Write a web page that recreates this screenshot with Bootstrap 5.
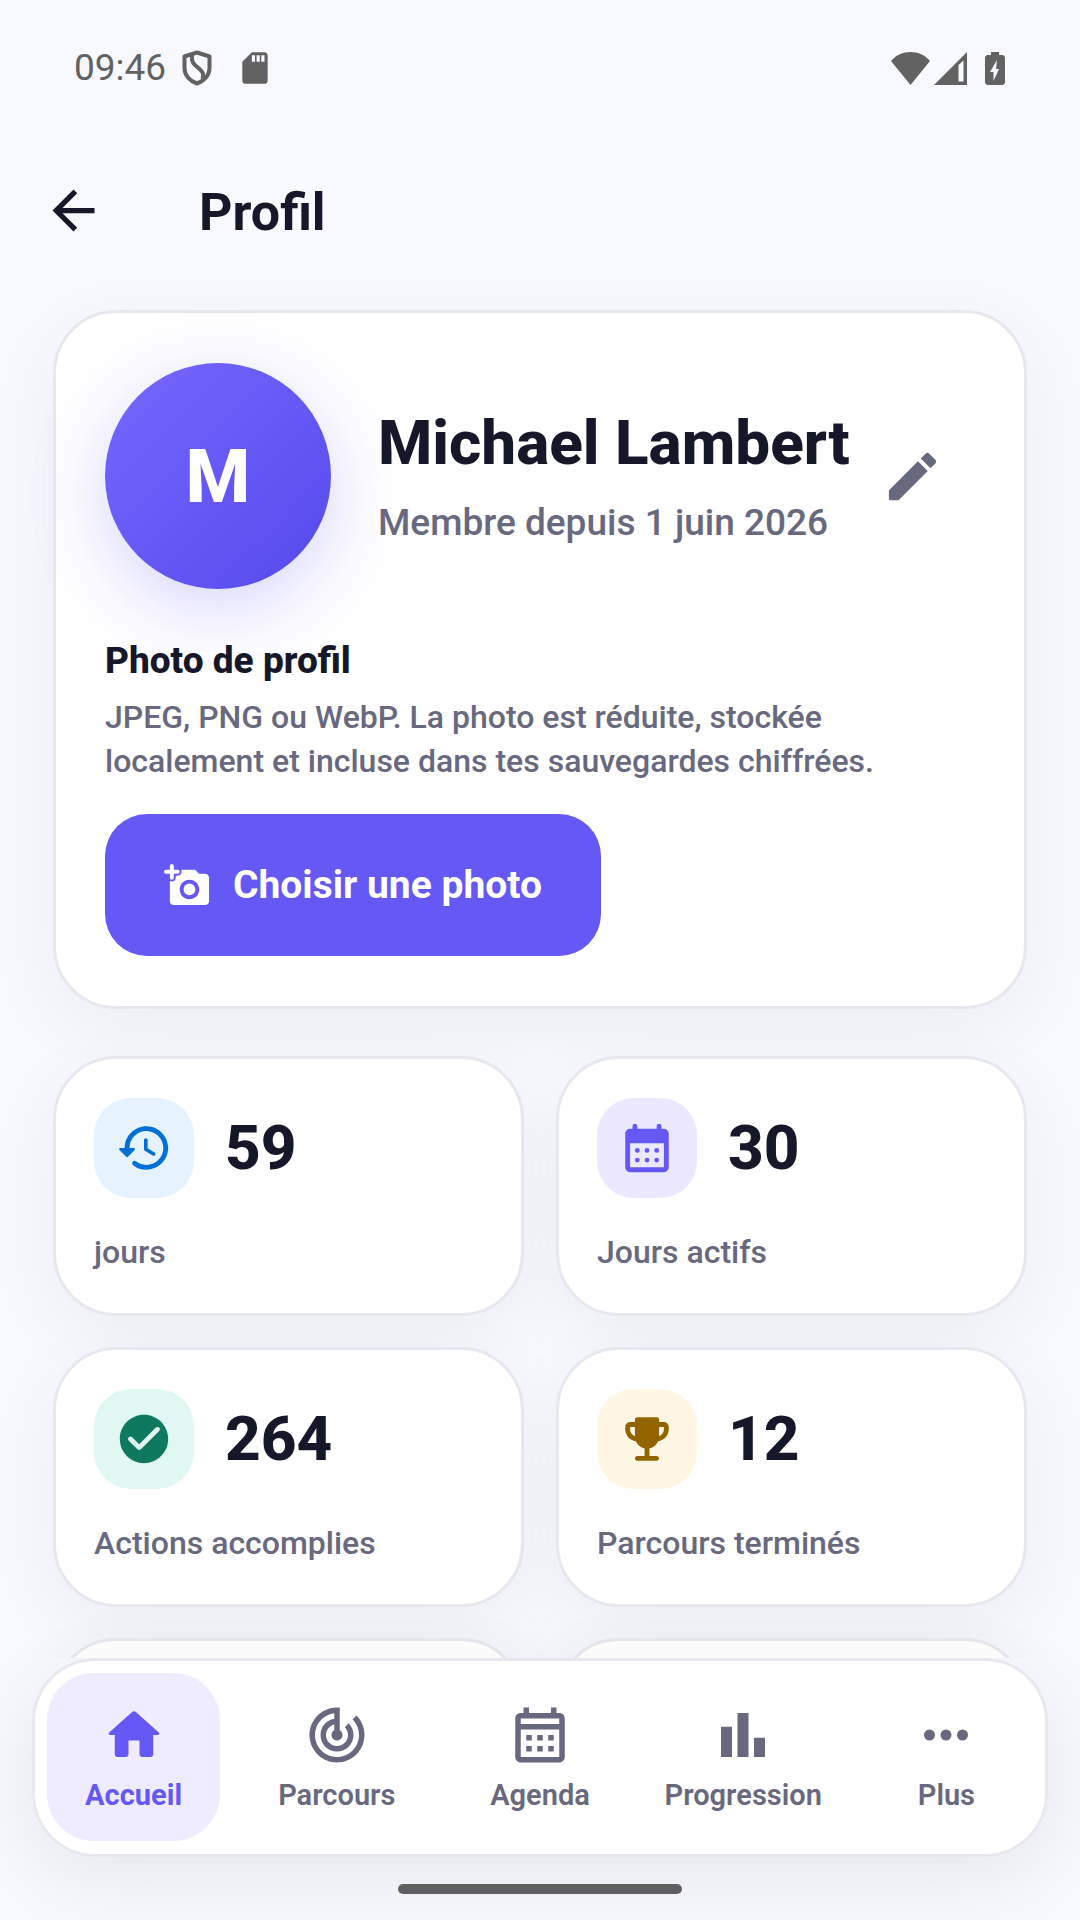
<!DOCTYPE html>
<html lang="fr">
<head>
<meta charset="utf-8">
<meta name="viewport" content="width=device-width, initial-scale=1">
<title>Profil</title>
<link href="https://cdn.jsdelivr.net/npm/bootstrap@5.3.0/dist/css/bootstrap.min.css" rel="stylesheet">
<style>
  :root { --ink: #161728; --muted-ink: #68687f; --brand: #6558f5; --line: #e7e7ef; }
  body { background: #f8f9ff; color: var(--ink); font-family: Roboto, "Liberation Sans", sans-serif; }
  svg { display: block; flex: none; fill: currentColor; }
  .status { height: 136px; padding: 0 75px 0 74px; color: #626262; font-size: 37px; line-height: 44px; }
  .signals { gap: 18px; }
  .appbar { height: 149px; padding: 0 42px; gap: 94px; }
  .appbar h1 { font-size: 52px; line-height: 64px; font-weight: 700; }
  .icon-btn { background: none; border: 0; padding: 0; color: inherit; }
  .icon-btn svg { width: 63px; height: 63px; }
  .screen-body { padding: 25px 53px 0; }
  .soft { background: #fff; border: 3px solid var(--line); border-radius: 63px; color: inherit;
    box-shadow: 0 20px 74px rgba(23, 23, 23, .05); }
  .profile { padding: 50px 49px; margin-bottom: 47px; }
  .identity { gap: 47px; margin-bottom: 47px; }
  .avatar { width: 226px; height: 226px; flex: none; color: #fff; font-size: 74px; font-weight: 800;
    background: linear-gradient(135deg, #7668ff, #5649ec); box-shadow: 0 20px 74px rgba(101, 88, 245, .25); }
  .identity h2 { font-size: 62px; line-height: 76px; font-weight: 800; margin-bottom: 17px; }
  .since { font-size: 37px; line-height: 50px; font-weight: 500; color: var(--muted-ink); }
  .edit { width: 126px; height: 126px; color: var(--muted-ink); }
  .profile h3 { font-size: 37px; line-height: 50px; font-weight: 800; margin-bottom: 9px; }
  .hint { font-size: 32px; line-height: 44px; font-weight: 500; color: var(--muted-ink); margin-bottom: 31px; }
  .choose { --bs-btn-color: #fff; --bs-btn-bg: var(--brand); --bs-btn-hover-color: #fff; --bs-btn-hover-bg: #5649ec;
    height: 142px; padding: 0 59px; gap: 22px; border: 0; border-radius: 42px; font-size: 39px; font-weight: 700; }
  .choose svg { width: 47px; height: 47px; }
  .stats { --bs-gutter-x: 32px; --bs-gutter-y: 31px; }
  .stat { min-height: 260px; padding: 39px 38px; }
  .stat-head { gap: 31px; margin-bottom: 32px; }
  .tile { width: 100px; height: 100px; border-radius: 37px; }
  .tile svg { width: 58px; height: 58px; }
  .tile-blue { background: #e6f3ff; color: #006fd6; }
  .tile-violet { background: #ebe8ff; color: var(--brand); }
  .tile-green { background: #e0f8f1; color: #0f7960; }
  .tile-gold { background: #fff6e3; color: #916400; }
  .figure-num { font-size: 62px; line-height: 76px; font-weight: 800; }
  .stat-label { font-size: 32px; line-height: 44px; font-weight: 500; color: var(--muted-ink); }
  .dock { padding: 0 32px 26px; }
  .tabs { border: 0; padding: 15px 0 16px; margin-bottom: 27px;
    box-shadow: inset 0 0 0 3px var(--line), 0 20px 74px rgba(23, 23, 23, .08); }
  .tab { display: flex; flex-direction: column; align-items: center; gap: 9px; margin: 0 15px; padding: 29px 0 28px;
    border-radius: 47px; font-size: 29px; line-height: 36px; font-weight: 600; color: var(--muted-ink);
    text-decoration: none; white-space: nowrap; }
  .tab svg { width: 66px; height: 66px; }
  .tab > span { display: flex; justify-content: center; width: 0; }
  .tab.current { background: #efecff; color: var(--brand); font-weight: 700; }
  .home-bar { width: 284px; height: 10px; background: #606062; }
  .equal { flex: 1 1 0; min-width: 0; }
</style>
</head>
<body>
<div class="vh-100 d-flex flex-column overflow-hidden">
  <div class="status d-flex align-items-center justify-content-between flex-shrink-0">
    <div class="d-flex align-items-center">
      <span>09:46</span>
      <svg class="ms-3" width="30" height="36" viewBox="0 0 30 36" style="fill:none" stroke="currentColor" stroke-width="4" stroke-linejoin="round"><path d="M15 2.500 2.500 6.500V18C2.500 25.500 8 31 15 33.500 22 31 27.500 25.500 27.500 18V6.500Z"/><path d="M10 5C9 13 13 15 17 18.500 21 22 22 24 20.500 29"/></svg>
      <svg class="ms-4" width="38" height="38" viewBox="0 0 24 24"><path d="M18 2h-8L4 8v12c0 1.100.9 2 2 2h12c1.100 0 2-.9 2-2V4c0-1.100-.9-2-2-2zm-6 6h-2V4h2v4zm3 0h-2V4h2v4zm3 0h-2V4h2v4z"/></svg>
    </div>
    <div class="signals d-flex align-items-center">
      <div class="d-flex gap-1">
        <svg width="39" height="33" viewBox="0 0 39 33"><path d="M19.500 33 0 9C5 3 12 0 19.500 0S34 3 39 9Z"/></svg>
        <svg width="33" height="33" viewBox="0 0 33 33"><path fill-rule="evenodd" d="M33 0V33H0ZM29.500 8.500 24.500 13V29.500H29.500Z"/></svg>
      </div>
      <svg width="20" height="33" viewBox="0 0 20 33"><path fill-rule="evenodd" d="M6 0h8v3h4l2 2v26l-2 2H2l-2-2V5l2-2h4ZM12 8 5 20h3.500v9L14 17h-3Z"/></svg>
    </div>
  </div>

  <header class="appbar d-flex align-items-center flex-shrink-0">
    <button type="button" class="icon-btn" aria-label="Retour">
      <svg viewBox="0 0 24 24"><path d="M20 11H7.830l5.590-5.590L12 4l-8 8 8 8 1.410-1.410L7.830 13H20v-2z"/></svg>
    </button>
    <h1 class="m-0 pt-1">Profil</h1>
  </header>

  <main class="screen-body flex-grow-1 overflow-hidden">
    <section class="soft profile">
      <div class="identity d-flex align-items-center">
        <div class="avatar rounded-circle d-flex align-items-center justify-content-center">M</div>
        <div class="equal text-nowrap">
          <h2>Michael Lambert</h2>
          <p class="since m-0">Membre depuis 1 juin 2026</p>
        </div>
        <button type="button" class="icon-btn edit d-flex align-items-center justify-content-center" aria-label="Modifier">
          <svg viewBox="0 0 24 24"><path d="M3 17.460v3.040c0 .28.22.5.5.5h3.040c.13 0 .26-.05.35-.15L17.810 9.940l-3.750-3.750L3.150 17.100c-.1.1-.15.22-.15.36zM20.710 7.040c.39-.39.39-1.020 0-1.410l-2.340-2.340c-.39-.39-1.020-.39-1.410 0l-1.830 1.830 3.750 3.750 1.830-1.830z"/></svg>
        </button>
      </div>
      <h3>Photo de profil</h3>
      <p class="hint">JPEG, PNG ou WebP. La photo est réduite, stockée localement et incluse dans tes sauvegardes chiffrées.</p>
      <button type="button" class="btn choose d-inline-flex align-items-center">
        <svg viewBox="0 0 24 24"><path d="M3 8c0 .55.45 1 1 1s1-.45 1-1V6h2c.55 0 1-.45 1-1s-.45-1-1-1H5V2c0-.55-.45-1-1-1s-1 .45-1 1v2H1c-.55 0-1 .45-1 1s.45 1 1 1h2v2z"/><circle cx="13" cy="14" r="3"/><path d="M21 6h-3.170l-1.240-1.350c-.37-.41-.91-.65-1.470-.65h-6.400c.17.3.28.63.28 1 0 1.100-.9 2-2 2H6v1c0 1.100-.9 2-2 2-.37 0-.7-.11-1-.28V20c0 1.100.9 2 2 2h16c1.100 0 2-.9 2-2V8c0-1.100-.9-2-2-2zm-8 13c-2.760 0-5-2.240-5-5s2.240-5 5-5 5 2.240 5 5-2.240 5-5 5z"/></svg>
        Choisir une photo
      </button>
    </section>

    <section class="row row-cols-2 stats">
      <div class="col"><div class="soft stat">
        <div class="stat-head d-flex align-items-center">
          <span class="tile tile-blue d-flex align-items-center justify-content-center"><svg viewBox="0 0 24 24"><path d="M13.260 3C8.170 2.860 4 6.950 4 12H2.210c-.45 0-.67.54-.35.85l2.790 2.800c.2.2.51.2.71 0l2.790-2.800c.31-.31.09-.85-.36-.85H6c0-3.900 3.180-7.050 7.100-7 3.720.05 6.850 3.180 6.900 6.900.05 3.910-3.100 7.100-7 7.100-1.610 0-3.100-.55-4.280-1.480-.4-.31-.96-.28-1.320.08-.42.42-.39 1.130.08 1.490C9 20.290 10.910 21 13 21c5.050 0 9.140-4.170 9-9.260-.13-4.690-4.050-8.610-8.740-8.740zm-.51 5c-.41 0-.75.34-.75.75v3.680c0 .35.19.68.49.86l3.120 1.850c.36.21.82.09 1.030-.26.21-.36.09-.82-.26-1.030l-2.880-1.710v-3.400c0-.4-.34-.74-.75-.74z"/></svg></span>
          <span class="figure-num">59</span>
        </div>
        <div class="stat-label">jours</div>
      </div></div>
      <div class="col"><div class="soft stat">
        <div class="stat-head d-flex align-items-center">
          <span class="tile tile-violet d-flex align-items-center justify-content-center"><svg viewBox="0 0 24 24"><path fill-rule="evenodd" d="M17 2c-.55 0-1 .45-1 1v1H8V3c0-.55-.45-1-1-1s-1 .45-1 1v1H5c-1.110 0-2 .9-2 2v14c0 1.100.89 2 2 2h14c1.100 0 2-.9 2-2V6c0-1.100-.9-2-2-2h-1V3c0-.55-.45-1-1-1zM5 10h14v10H5z"/><circle cx="8" cy="13" r="1"/><circle cx="12" cy="13" r="1"/><circle cx="16" cy="13" r="1"/><circle cx="8" cy="17" r="1"/><circle cx="12" cy="17" r="1"/><circle cx="16" cy="17" r="1"/></svg></span>
          <span class="figure-num">30</span>
        </div>
        <div class="stat-label">Jours actifs</div>
      </div></div>
      <div class="col"><div class="soft stat">
        <div class="stat-head d-flex align-items-center">
          <span class="tile tile-green d-flex align-items-center justify-content-center"><svg viewBox="0 0 24 24"><path d="M12 2C6.480 2 2 6.480 2 12s4.480 10 10 10 10-4.480 10-10S17.520 2 12 2zM9.290 16.290 5.700 12.700c-.39-.39-.39-1.020 0-1.410.39-.39 1.020-.39 1.410 0L10 14.170l6.880-6.880c.39-.39 1.020-.39 1.410 0 .39.39.39 1.020 0 1.410l-7.590 7.590c-.38.39-1.020.39-1.410 0z"/></svg></span>
          <span class="figure-num">264</span>
        </div>
        <div class="stat-label">Actions accomplies</div>
      </div></div>
      <div class="col"><div class="soft stat">
        <div class="stat-head d-flex align-items-center">
          <span class="tile tile-gold d-flex align-items-center justify-content-center"><svg viewBox="0 0 24 24"><path d="M19 5h-2V4c0-.55-.45-1-1-1H8c-.55 0-1 .45-1 1v1H5c-1.100 0-2 .9-2 2v1c0 2.550 1.920 4.630 4.390 4.940.63 1.500 1.980 2.630 3.610 2.960V19H8c-.55 0-1 .45-1 1s.45 1 1 1h8c.55 0 1-.45 1-1s-.45-1-1-1h-3v-3.100c1.630-.33 2.980-1.460 3.610-2.960C19.080 12.630 21 10.550 21 8V7c0-1.100-.9-2-2-2zM5 8V7h2v3.820C5.840 10.400 5 9.300 5 8zm14 0c0 1.300-.84 2.400-2 2.820V7h2v1z"/></svg></span>
          <span class="figure-num">12</span>
        </div>
        <div class="stat-label">Parcours terminés</div>
      </div></div>
      <div class="col"><div class="soft stat"></div></div>
      <div class="col"><div class="soft stat"></div></div>
    </section>
  </main>

  <footer class="dock position-relative flex-shrink-0">
    <nav class="soft tabs d-flex" aria-label="Navigation principale">
      <div class="equal"><a class="tab current" href="#accueil" aria-current="page">
        <svg viewBox="0 0 24 24"><path d="M10 19v-5h4v5c0 .55.45 1 1 1h3c.55 0 1-.45 1-1v-7h1.700c.46 0 .68-.57.33-.87L12.670 3.600c-.38-.34-.96-.34-1.340 0l-8.360 7.530c-.34.3-.13.87.33.87H5v7c0 .55.45 1 1 1h3c.55 0 1-.45 1-1z"/></svg><span>Accueil</span></a></div>
      <div class="equal"><a class="tab" href="#parcours">
        <svg viewBox="0 0 24 24"><path d="M19.070 4.930l-1.410 1.410C19.100 7.790 20 9.790 20 12c0 4.420-3.580 8-8 8s-8-3.580-8-8c0-4.080 3.050-7.440 7-7.930v2.020C8.160 6.570 6 9.030 6 12c0 3.310 2.690 6 6 6s6-2.690 6-6c0-1.660-.67-3.160-1.760-4.240l-1.410 1.410C15.550 9.900 16 10.900 16 12c0 2.210-1.790 4-4 4s-4-1.790-4-4c0-1.860 1.280-3.410 3-3.860v2.140c-.6.35-1 .98-1 1.720 0 1.100.9 2 2 2s2-.9 2-2c0-.74-.4-1.380-1-1.720V2h-1C6.480 2 2 6.480 2 12s4.480 10 10 10 10-4.480 10-10c0-2.760-1.120-5.260-2.930-7.070z"/></svg><span>Parcours</span></a></div>
      <div class="equal"><a class="tab" href="#agenda">
        <svg viewBox="0 0 24 24"><path d="M19 4h-1V2h-2v2H8V2H6v2H5c-1.110 0-1.990.9-1.990 2L3 20c0 1.100.89 2 2 2h14c1.100 0 2-.9 2-2V6c0-1.100-.9-2-2-2zm0 16H5V10h14v10zm0-12H5V6h14v2zM9 14H7v-2h2v2zm4 0h-2v-2h2v2zm4 0h-2v-2h2v2zm-8 4H7v-2h2v2zm4 0h-2v-2h2v2zm4 0h-2v-2h2v2z"/></svg><span>Agenda</span></a></div>
      <div class="equal"><a class="tab" href="#progression">
        <svg viewBox="0 0 24 24"><path d="M4 9h4v11H4zm12 4h4v7h-4zm-6-9h4v16h-4z"/></svg><span>Progression</span></a></div>
      <div class="equal"><a class="tab" href="#plus">
        <svg viewBox="0 0 24 24"><circle cx="6" cy="12" r="2"/><circle cx="12" cy="12" r="2"/><circle cx="18" cy="12" r="2"/></svg><span>Plus</span></a></div>
    </nav>
    <div class="home-bar rounded-pill mx-auto"></div>
  </footer>
</div>
<script src="https://cdn.jsdelivr.net/npm/bootstrap@5.3.0/dist/js/bootstrap.bundle.min.js"></script>
</body>
</html>
